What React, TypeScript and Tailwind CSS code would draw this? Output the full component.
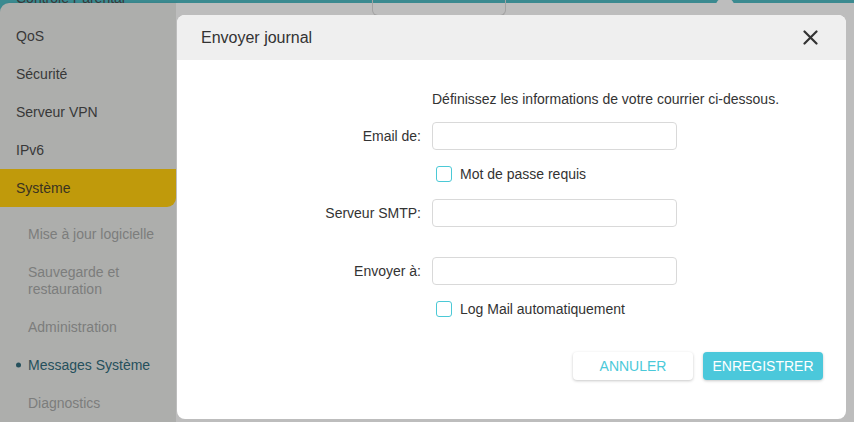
import React from "react";

const MAIN_MENU = ["Contrôle Parental", "QoS", "Sécurité", "Serveur VPN", "IPv6"];

const SUB_MENU: { label: React.ReactNode; tall?: boolean; active?: boolean }[] = [
  { label: "Mise à jour logicielle" },
  { label: <>Sauvegarde et<br />restauration</>, tall: true },
  { label: "Administration" },
  { label: "Messages Système", active: true },
  { label: "Diagnostics" },
];

function Sidebar() {
  return (
    <aside className="w-[176px] shrink-0 rounded-tl-[9px] bg-[#adaeac] shadow-[1px_0_2px_rgba(0,0,0,0.12)]">
      <ul className="-mt-[24px]">
        {MAIN_MENU.map((m) => (
          <li key={m} className="flex h-[38px] items-center pl-4 text-[14px] text-[#383838]">
            {m}
          </li>
        ))}
        <li className="flex h-[38px] items-center rounded-br-[9px] bg-[#c09a0b] pl-4 text-[14px] text-[#3a3320]">
          Système
        </li>
      </ul>
      <ul className="pt-2">
        {SUB_MENU.map((s, i) => (
          <li
            key={i}
            className={`relative flex items-center pl-7 text-[14px] leading-[17px] ${
              s.tall ? "h-[55px]" : "h-[38px]"
            } ${s.active ? "text-[#25505c]" : "text-[#7c7d7c]"}`}
          >
            {s.active && (
              <span className="absolute left-[16px] top-1/2 h-[5px] w-[5px] -translate-y-1/2 rounded-full bg-[#25505c]" />
            )}
            <span>{s.label}</span>
          </li>
        ))}
      </ul>
    </aside>
  );
}

function Checkbox({ label }: { label: string }) {
  return (
    <label className="flex h-5 items-center gap-2 pl-1 text-[14px] text-[#333]">
      <span className="h-4 w-4 rounded-[3px] border-[1.5px] border-[#4bc9d6] bg-white" />
      {label}
    </label>
  );
}

function Field({ label }: { label: string }) {
  return (
    <div className="flex items-center">
      <span className="w-[244px] text-right text-[14px] text-[#333]">{label}</span>
      <input
        className="ml-[11px] h-[28px] w-[245px] rounded-[4px] border border-[#d9d9d9] bg-white outline-none"
        readOnly
      />
    </div>
  );
}

function Modal() {
  return (
    <div className="absolute left-[177px] top-[15px] flex h-[404px] w-[669px] flex-col overflow-hidden rounded-[8px] bg-white">
      <div className="flex h-[45px] shrink-0 items-center justify-between bg-[#efefef] pl-6 pr-[28px]">
        <span className="text-[16px] text-[#333]">Envoyer journal</span>
        <svg width="15" height="15" viewBox="0 0 15 15" className="text-[#333]">
          <path d="M1.5 1.5 L13.5 13.5 M13.5 1.5 L1.5 13.5" stroke="currentColor" strokeWidth="2.2" strokeLinecap="round" />
        </svg>
      </div>
      <div className="flex flex-col pt-[29px]">
        <p className="ml-[255px] h-5 text-[14px] leading-5 text-[#333]">
          Définissez les informations de votre courrier ci-dessous.
        </p>
        <div className="mt-[13px]">
          <Field label="Email de:" />
        </div>
        <div className="ml-[255px] mt-[14px]">
          <Checkbox label="Mot de passe requis" />
        </div>
        <div className="mt-[15px]">
          <Field label="Serveur SMTP:" />
        </div>
        <div className="mt-[30px]">
          <Field label="Envoyer à:" />
        </div>
        <div className="ml-[255px] mt-[14px]">
          <Checkbox label="Log Mail automatiquement" />
        </div>
        <div className="mt-[33px] flex justify-end gap-[10px] pr-[23px]">
          <button className="h-[28px] w-[120px] rounded-[4px] bg-white text-[14px] text-[#4bc9d9] shadow-[0_1px_3px_rgba(0,0,0,0.22)]">
            ANNULER
          </button>
          <button className="h-[28px] w-[120px] rounded-[4px] bg-[#4bc8db] text-[14px] text-white shadow-[0_1px_3px_rgba(0,0,0,0.22)]">
            ENREGISTRER
          </button>
        </div>
      </div>
    </div>
  );
}

export default function App() {
  return (
    <div
      className="relative h-[422px] w-[854px] overflow-hidden bg-[#3b8a90]"
      style={{ fontFamily: '"Liberation Sans", Arial, sans-serif' }}
    >
      <div className="flex h-full pt-[3px]">
        <Sidebar />
        <main className="relative flex-1 bg-[#bdbdbd]">
          <div className="ml-[196px] -mt-[3px] h-[16px] w-[134px] rounded-b-[6px] border border-t-0 border-[#a3a3a3]" />
          <span className="absolute left-[540px] -top-[4px] h-[6px] w-[18px] rounded-t-full bg-[#bdbdbd]" />
        </main>
      </div>
      <Modal />
    </div>
  );
}
